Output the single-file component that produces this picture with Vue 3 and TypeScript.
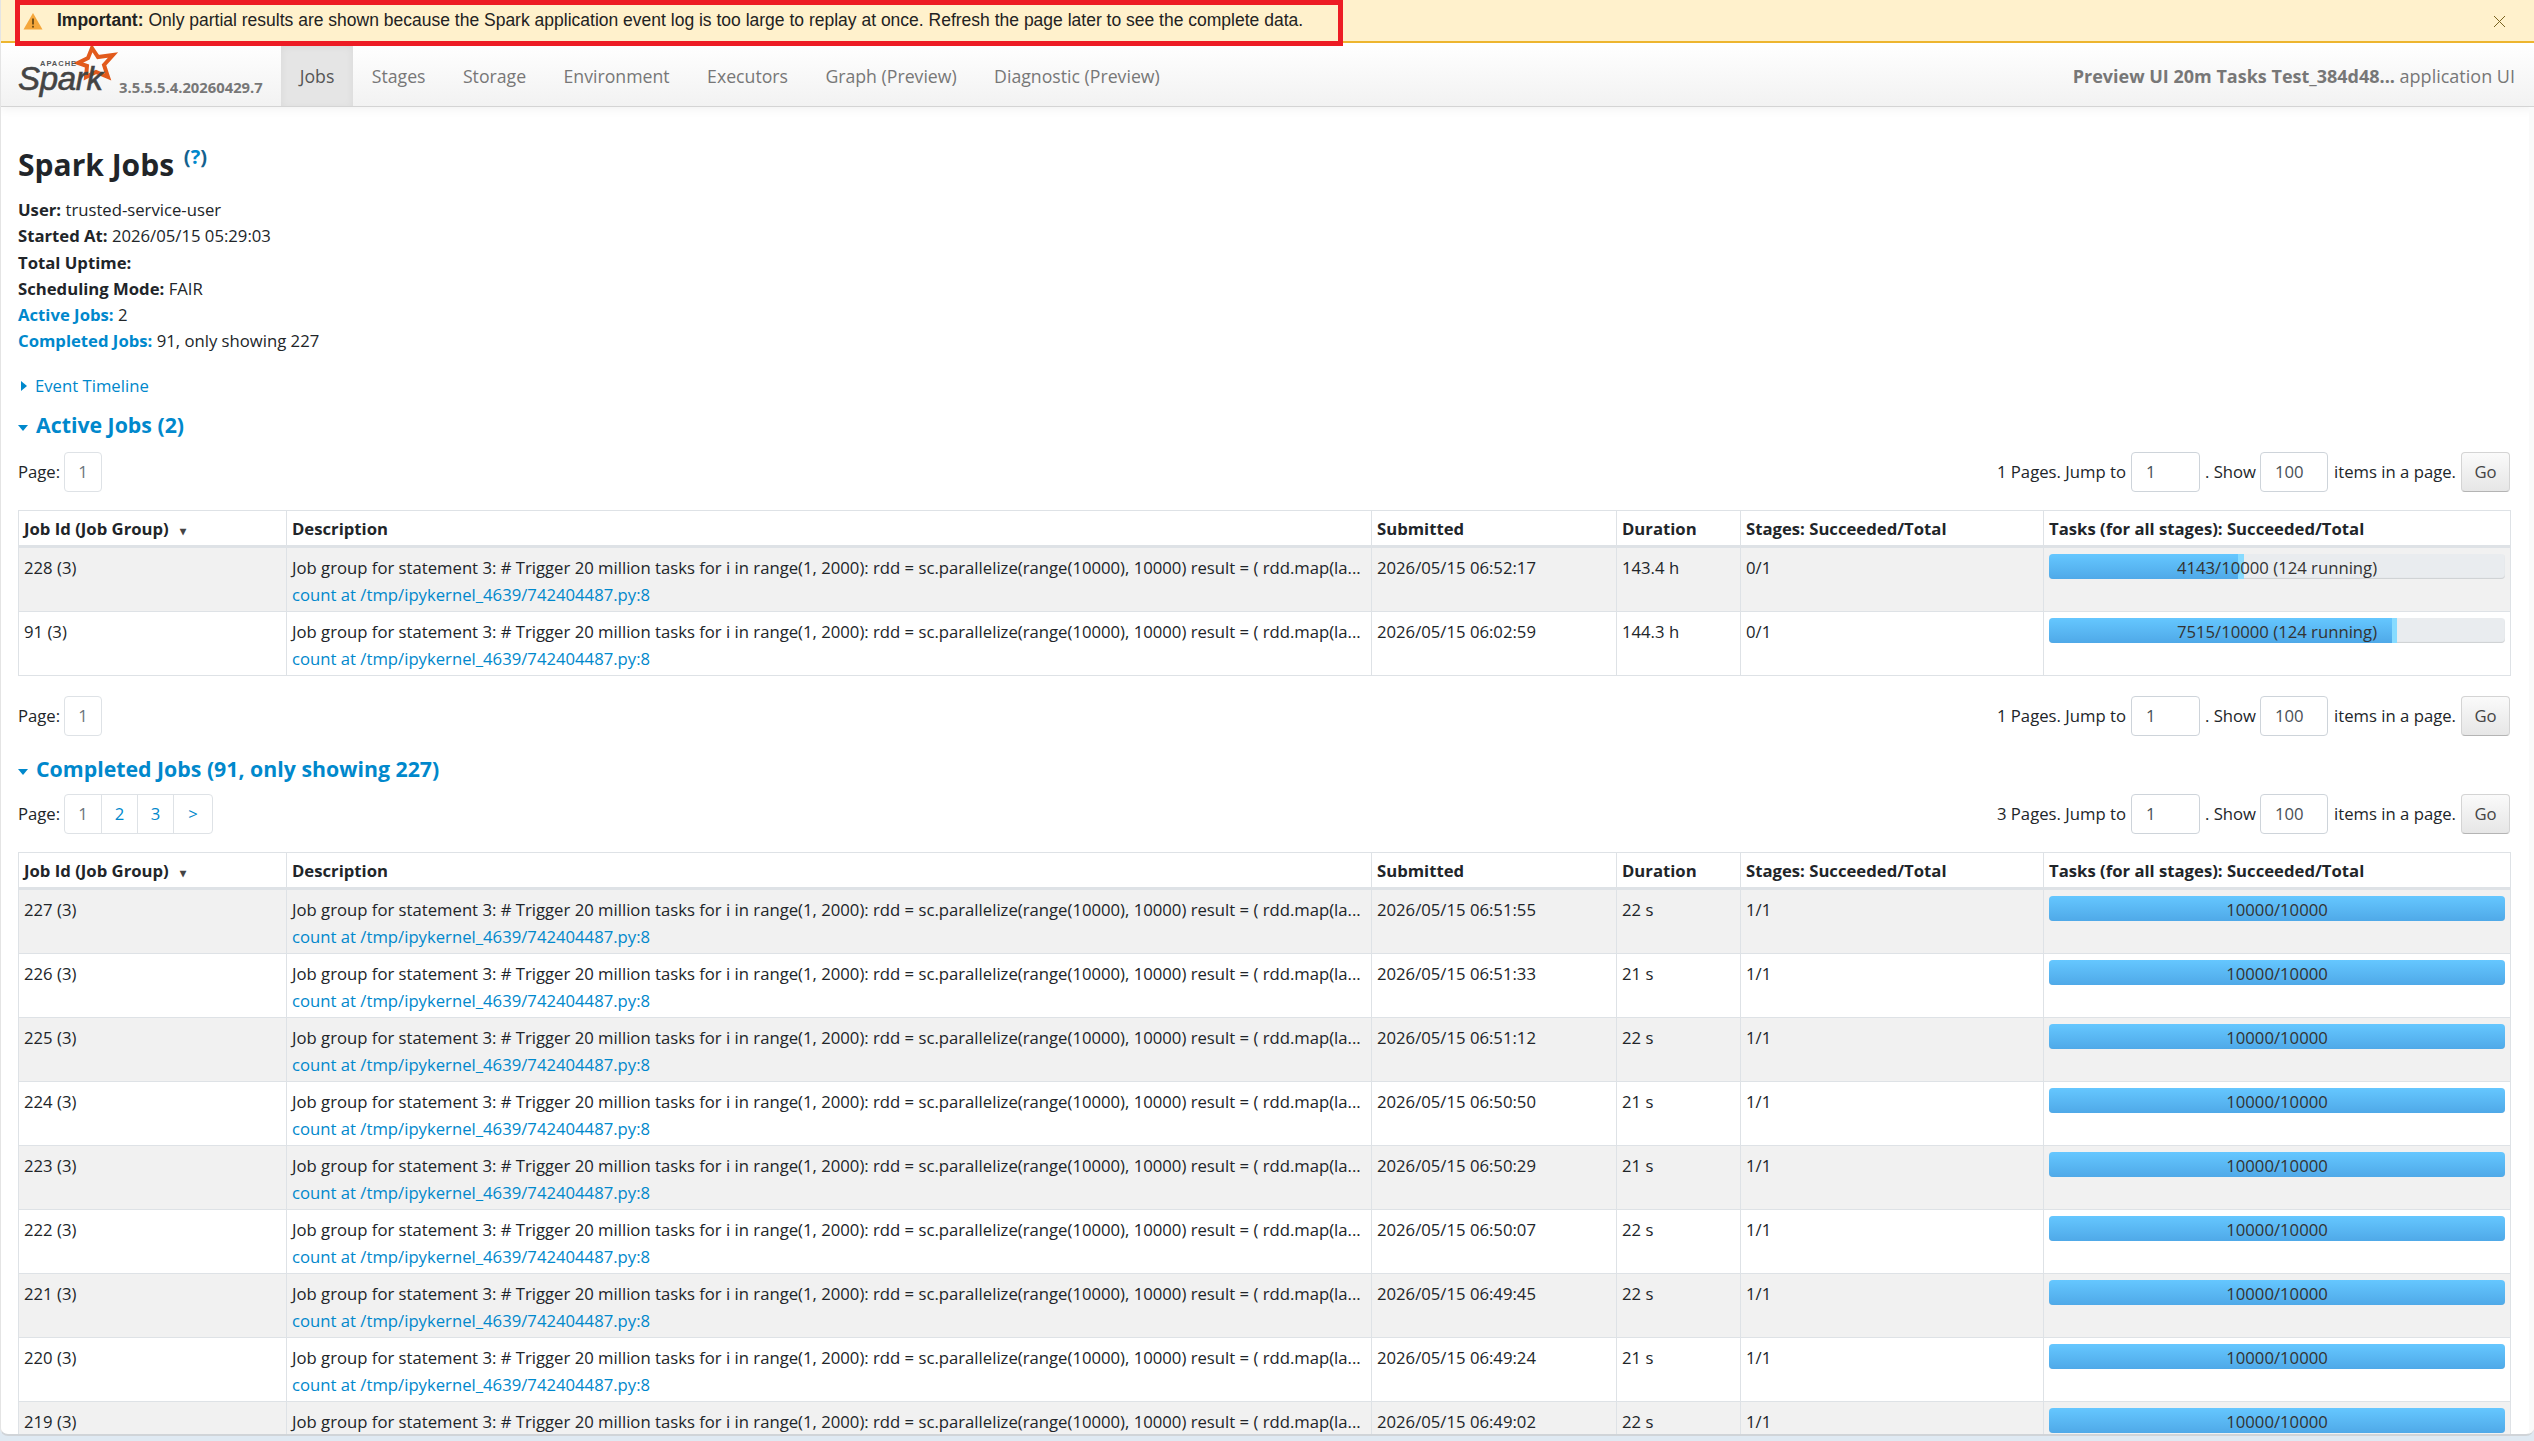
<template>
  <div class="window">
    <div class="banner">
      <svg class="warn" width="20" height="18" viewBox="0 0 20 18">
        <path d="M10 1 L19.5 17.5 H0.5 Z" fill="#f5a73b" />
        <rect x="9.2" y="6.5" width="1.6" height="6" fill="#5a3d10" />
        <rect x="9.2" y="13.8" width="1.6" height="1.8" fill="#5a3d10" />
      </svg>
      <span class="banner-text"><b>Important:</b> Only partial results are shown because the Spark application event log is too large to replay at once. Refresh the page later to see the complete data.</span>
      <svg class="close" width="13" height="13" viewBox="0 0 13 13">
        <path d="M1 1 L12 12 M12 1 L1 12" stroke="#7a6420" stroke-width="1" fill="none" />
      </svg>
      <div class="callout"></div>
    </div>

    <nav class="navbar">
      <div class="brand">
        <svg class="logo" width="104" height="54" viewBox="0 0 104 54">
          <path d="M76 2 L82 11 L97 9 L88 19 L92 31 L80 26 L70 31 L71 20 L62 17 L72 12 Z" fill="none" stroke="#e25a1c" stroke-width="4" />
          <text x="24" y="20" class="logo-apache">APACHE</text>
          <text x="2" y="44" class="logo-spark">Spark</text>
        </svg>
        <span class="version">3.5.5.5.4.20260429.7</span>
      </div>
      <ul class="tabs">
        <li v-for="t in tabs" :key="t" :class="['tab', { active: t === 'Jobs' }]">{{ t }}</li>
      </ul>
      <div class="app-title"><b>Preview UI 20m Tasks Test_384d48...</b> application UI</div>
    </nav>

    <main class="content">
      <h3 class="title">Spark Jobs <sup class="help">(<span>?</span>)</sup></h3>
      <ul class="summary">
        <li><b>User:</b> trusted-service-user</li>
        <li><b>Started At:</b> 2026/05/15 05:29:03</li>
        <li><b>Total Uptime:</b></li>
        <li><b>Scheduling Mode:</b> FAIR</li>
        <li><a><b>Active Jobs:</b></a> 2</li>
        <li><a><b>Completed Jobs:</b></a> 91, only showing 227</li>
      </ul>
      <div class="timeline"><span class="arrow-right"></span><a>Event Timeline</a></div>

      <h4 class="section first"><span class="arrow-down"></span>Active Jobs (2)</h4>
      <div class="pager-row top-a">
        <div class="pages">
          <span class="page-label">Page:</span>
          <div class="page-box"><span class="page-item current">1</span></div>
        </div>
        <div class="jump">
          <span class="j1">1 Pages. Jump to</span>
          <span class="input i1">1</span>
          <span class="j2">. Show</span>
          <span class="input i2">100</span>
          <span class="j3">items in a page.</span>
          <span class="go">Go</span>
        </div>
      </div>
      <table class="jobs">
        <colgroup>
          <col class="c1" /><col class="c2" /><col class="c3" /><col class="c4" /><col class="c5" /><col />
        </colgroup>
        <thead>
          <tr>
            <th>Job Id (Job Group) <span class="sort">▾</span></th>
            <th>Description</th><th>Submitted</th><th>Duration</th>
            <th>Stages: Succeeded/Total</th><th>Tasks (for all stages): Succeeded/Total</th>
          </tr>
        </thead>
        <tbody>
          <tr v-for="j in activeJobs" :key="j.id">
            <td>{{ j.id }} (3)</td>
            <td><div>{{ desc }}</div><a>{{ link }}</a></td>
            <td>{{ j.submitted }}</td>
            <td>{{ j.duration }}</td>
            <td>{{ j.stages }}</td>
            <td>
              <div class="progress">
                <div class="bar done" :style="{ width: j.done + '%' }"></div>
                <div class="bar running" :style="{ width: '1.24%' }"></div>
                <span class="bar-text">{{ j.label }}</span>
              </div>
            </td>
          </tr>
        </tbody>
      </table>
      <div class="pager-row lower">
        <div class="pages">
          <span class="page-label">Page:</span>
          <div class="page-box"><span class="page-item current">1</span></div>
        </div>
        <div class="jump">
          <span class="j1">1 Pages. Jump to</span>
          <span class="input i1">1</span>
          <span class="j2">. Show</span>
          <span class="input i2">100</span>
          <span class="j3">items in a page.</span>
          <span class="go">Go</span>
        </div>
      </div>

      <h4 class="section second"><span class="arrow-down"></span>Completed Jobs (91, only showing 227)</h4>
      <div class="pager-row top-b">
        <div class="pages">
          <span class="page-label">Page:</span>
          <div class="page-box">
            <span class="page-item current">1</span>
            <span class="page-item">2</span>
            <span class="page-item">3</span>
            <span class="page-item next">&gt;</span>
          </div>
        </div>
        <div class="jump">
          <span class="j1">3 Pages. Jump to</span>
          <span class="input i1">1</span>
          <span class="j2">. Show</span>
          <span class="input i2">100</span>
          <span class="j3">items in a page.</span>
          <span class="go">Go</span>
        </div>
      </div>
      <table class="jobs">
        <colgroup>
          <col class="c1" /><col class="c2" /><col class="c3" /><col class="c4" /><col class="c5" /><col />
        </colgroup>
        <thead>
          <tr>
            <th>Job Id (Job Group) <span class="sort">▾</span></th>
            <th>Description</th><th>Submitted</th><th>Duration</th>
            <th>Stages: Succeeded/Total</th><th>Tasks (for all stages): Succeeded/Total</th>
          </tr>
        </thead>
        <tbody>
          <tr v-for="j in completedJobs" :key="j.id">
            <td>{{ j.id }} (3)</td>
            <td><div>{{ desc }}</div><a>{{ link }}</a></td>
            <td>{{ j.submitted }}</td>
            <td>{{ j.duration }}</td>
            <td>1/1</td>
            <td>
              <div class="progress">
                <div class="bar done" style="width: 100%"></div>
                <span class="bar-text">10000/10000</span>
              </div>
            </td>
          </tr>
        </tbody>
      </table>
    </main>
  </div>
</template>

<script setup lang="ts">
const tabs = ['Jobs', 'Stages', 'Storage', 'Environment', 'Executors', 'Graph (Preview)', 'Diagnostic (Preview)']

const desc = 'Job group for statement 3: # Trigger 20 million tasks for i in range(1, 2000): rdd = sc.parallelize(range(10000), 10000) result = ( rdd.map(la...'
const link = 'count at /tmp/ipykernel_4639/742404487.py:8'

const activeJobs = [
  { id: 228, submitted: '2026/05/15 06:52:17', duration: '143.4 h', stages: '0/1', done: 41.43, label: '4143/10000 (124 running)' },
  { id: 91, submitted: '2026/05/15 06:02:59', duration: '144.3 h', stages: '0/1', done: 75.15, label: '7515/10000 (124 running)' }
]

const completedJobs = [
  { id: 227, submitted: '2026/05/15 06:51:55', duration: '22 s' },
  { id: 226, submitted: '2026/05/15 06:51:33', duration: '21 s' },
  { id: 225, submitted: '2026/05/15 06:51:12', duration: '22 s' },
  { id: 224, submitted: '2026/05/15 06:50:50', duration: '21 s' },
  { id: 223, submitted: '2026/05/15 06:50:29', duration: '21 s' },
  { id: 222, submitted: '2026/05/15 06:50:07', duration: '22 s' },
  { id: 221, submitted: '2026/05/15 06:49:45', duration: '22 s' },
  { id: 220, submitted: '2026/05/15 06:49:24', duration: '21 s' },
  { id: 219, submitted: '2026/05/15 06:49:02', duration: '22 s' }
]
</script>

<style>
html, body { margin: 0; height: 100%; overflow: hidden; background: #dfe9f2; }
</style>

<style scoped>
.window {
  height: 1436px; overflow: hidden; background: #fff; box-sizing: border-box;
  border-left: 1px solid #e4e4e4; border-bottom: 2px solid #d0d4d8; border-radius: 0 0 8px 8px;
  font-family: "Open Sans", "Noto Sans", sans-serif; font-size: 16.7px; color: #212529;
}
a { color: #0088cc; }
b { font-weight: 700; }

.banner {
  position: relative; height: 43px; box-sizing: border-box; display: flex; align-items: center;
  background: #fff1cc; border-bottom: 2px solid #edb52e; padding-left: 22px;
  font-family: "Liberation Sans", Arial, sans-serif; font-size: 17.5px; color: #222;
}
.warn { flex: none; }
.banner-text { margin-left: 14px; white-space: nowrap; }
.close { position: absolute; right: 28px; top: 15px; }
.callout { position: absolute; left: 14px; top: 0; width: 1328px; height: 46px; box-sizing: border-box; border: 5px solid #ed1c24; }

.navbar {
  height: 64px; box-sizing: border-box; display: flex; align-items: flex-start;
  background: linear-gradient(to bottom, #ffffff, #f2f2f2); border-bottom: 1px solid #d4d4d4;
  box-shadow: 0 2px 10px rgba(0, 0, 0, 0.06);
}
.brand { width: 280px; flex: none; position: relative; }
.logo { position: absolute; left: 15px; top: 3px; }
.logo-apache { font-family: "Liberation Sans", sans-serif; font-size: 7.5px; font-weight: 700; fill: #555; letter-spacing: 1px; }
.logo-spark { font-family: "Liberation Sans", sans-serif; font-size: 33px; font-style: italic; fill: #444; stroke: #444; stroke-width: 0.6px; letter-spacing: -0.3px; }
.version { position: absolute; left: 118px; top: 34px; font-size: 14.8px; line-height: 20px; font-weight: 700; color: #777; white-space: nowrap; }
.tabs { display: flex; list-style: none; margin: 0; padding: 0; font-size: 17.7px; }
.tab { padding: 0 18.7px; height: 63px; line-height: 67px; color: #777; }
.tab.active { background: #e5e5e5; color: #555; box-shadow: inset 0 3px 8px rgba(0, 0, 0, 0.06); }
.app-title { margin-left: auto; padding-right: 19px; line-height: 66px; color: #777; font-size: 18px; }

.content { padding: 0 18px 0 17px; border-right: 5px solid #fafafa; min-height: 1340px; }
.title { margin: 0; padding-top: 38px; font-size: 30px; line-height: 40px; font-weight: 700; color: #212529; }
.help { font-size: 20px; color: #14628f; line-height: 0; font-weight: 700; vertical-align: 12px; margin-left: 2px; }
.help span { color: #0088cc; }
.summary { list-style: none; margin: 12px 0 0; padding: 0; line-height: 26.25px; }
.timeline { margin-top: 18.6px; line-height: 26px; display: flex; align-items: center; }
.arrow-right { width: 0; height: 0; border-left: 6px solid #0088cc; border-top: 5px solid transparent; border-bottom: 5px solid transparent; margin: 0 8px 0 3px; }
.arrow-down { display: inline-block; width: 0; height: 0; border-top: 6px solid #0088cc; border-left: 5.5px solid transparent; border-right: 5.5px solid transparent; margin-right: 8px; vertical-align: 2px; }
.section { margin: 0; font-size: 21.3px; line-height: 28px; font-weight: 700; color: #0088cc; }
.section.first { margin-top: 12px; }
.section.second { margin-top: 19px; }

.pager-row { display: flex; justify-content: space-between; align-items: center; height: 41px; }
.pager-row.top-a { margin-top: 12px; }
.pager-row.top-b { margin-top: 10px; }
.pager-row.lower { margin-top: 19px; }
.pages { display: flex; align-items: center; }
.page-label { width: 46px; }
.page-box { display: flex; border: 1px solid #dee2e6; border-radius: 4px; height: 40px; box-sizing: border-box; }
.page-item { width: 36px; text-align: center; line-height: 38px; color: #0088cc; border-left: 1px solid #dee2e6; box-sizing: border-box; }
.page-item:first-child { border-left: 0; }
.page-item.current { color: #6c757d; }
.page-item.next { width: 39px; }
.jump { display: flex; align-items: center; margin-right: 1px; }
.input { display: block; height: 40px; box-sizing: border-box; border: 1px solid #ced4da; border-radius: 4px; line-height: 38px; padding-left: 14px; color: #495057; background: #fff; }
.i1 { width: 69px; margin-left: 5px; }
.i2 { width: 68px; margin-left: 4px; }
.j2 { margin-left: 5px; }
.j3 { margin-left: 6px; margin-right: 5px; }
.go {
  width: 49px; height: 40px; box-sizing: border-box; text-align: center; line-height: 38px; color: #444;
  border: 1px solid #d4d4d4; border-radius: 4px; background: linear-gradient(to bottom, #fafafa, #e6e6e6);
  border-bottom-color: #b4b4b4;
}

.jobs { width: 2493px; margin-top: 18px; border-collapse: collapse; table-layout: fixed; border: 1px solid #dee2e6; }
.c1 { width: 268px; }
.c2 { width: 1085px; }
.c3 { width: 245px; }
.c4 { width: 124px; }
.c5 { width: 303px; }
th {
  height: 36px; padding: 0 5px; box-sizing: border-box; text-align: left; font-weight: 700;
  border: 1px solid #dee2e6; border-bottom: 3px solid #dee2e6; white-space: nowrap; overflow: hidden;
}
.sort { font-size: 12px; margin-left: 7px; color: #444; }
td { padding: 6px 5px 3px; border: 1px solid #dee2e6; vertical-align: top; line-height: 27px; height: 64px; box-sizing: border-box; white-space: nowrap; overflow: hidden; }
tbody tr:nth-child(odd) td { background: #f1f1f1; }
.progress { position: relative; display: flex; height: 25px; border-radius: 4px; overflow: hidden; background: #e9ecef; box-shadow: inset 0 -1px 1px rgba(0, 0, 0, 0.12); }
.bar.done { background: linear-gradient(to bottom, #65c7ff, #4fa9e8); }
.bar.running { background: #87dbff; }
.bar-text { position: absolute; left: 0; right: 0; top: 1px; text-align: center; line-height: 25px; color: #333; }
</style>
